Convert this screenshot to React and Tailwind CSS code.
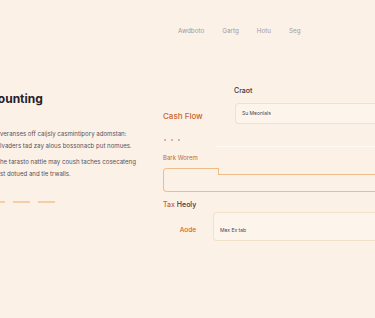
import React from "react";

const navItems = ["Awdboto", "Gartg", "Hotu", "Seg"];

const Nav = () => (
  <div className="flex h-[62px] items-center gap-[18px] pl-[178px]">
    {navItems.map((item) => (
      <span key={item} className="text-[6.3px] leading-none text-[#a09aa4]">
        {item}
      </span>
    ))}
  </div>
);

const Intro = () => (
  <div className="w-[163px] shrink-0 pt-[29px]">
    <h1 className="-ml-[25px] whitespace-nowrap text-[12px] font-bold leading-[16px] text-[#24212e]">
      Accounting
    </h1>
    <div className="mt-[21px] flex flex-col gap-[4px] text-[6.1px] leading-[12px] text-[#55505a]">
      <p className="whitespace-nowrap">
        <span className="block">veranses off caijsly casmintipory adomstan:</span>
        <span className="block">lvaders tad zay alous bossonacb put nomues.</span>
      </p>
      <p className="whitespace-nowrap">
        <span className="block">he tarasto nattle may coush taches cosecateng</span>
        <span className="block">st dotued and tle trwalls.</span>
      </p>
    </div>
    {/* pager dashes */}
    <div className="mt-[21px] -ml-[12px] flex gap-[8px]">
      <span className="h-[1.5px] w-[17px] bg-[#f2cfa6]" />
      <span className="h-[1.5px] w-[17px] bg-[#f2cfa6]" />
      <span className="h-[1.5px] w-[17px] bg-[#f2cfa6]" />
    </div>
  </div>
);

const Form = () => (
  <div className="flex flex-1 flex-col pt-[24px]">
    {/* cash flow + search */}
    <div className="flex items-end">
      <span className="mb-[2px] w-[71px] shrink-0 text-[8px] font-medium leading-[12px] text-[#c8652c]">
        Cash Flow
      </span>
      <div className="flex flex-1 flex-col">
        <span className="text-[7px] font-medium leading-[10px] text-[#3a3644]">
          Craot
        </span>
        <div className="mt-[7px] ml-[1px] flex h-[21px] items-center rounded-l-[4px] border border-r-0 border-[#f3e0c9] bg-[#fdf5ec] pl-[6px]">
          <span className="text-[5px] text-[#4b4650]">Su Meonlals</span>
        </div>
      </div>
    </div>

    {/* dots + faint divider */}
    <div className="mt-[9px] flex items-center">
      <div className="flex w-[52px] gap-[5px] pl-[1px]">
        <span className="h-[2px] w-[2px] rounded-full bg-[#c9a58a]" />
        <span className="h-[2px] w-[2px] rounded-full bg-[#c9a58a]" />
        <span className="h-[2px] w-[2px] rounded-full bg-[#c9a58a]" />
      </div>
      <span className="mt-[13px] h-px flex-1 bg-[#fffaf4]" />
    </div>

    <span className="mt-[7px] text-[6px] leading-[8px] text-[#b96a3c]">Bark Worem</span>

    {/* notched field */}
    <div className="mt-[6px] flex flex-col">
      <div className="h-[6px] w-[56px] rounded-tl-[4px] border-l border-r border-t border-[#efbd89]" />
      <div className="flex h-[18px] rounded-bl-[4px] border-b border-l border-[#efbd89]">
        <div className="w-[54px]" />
        <div className="flex-1 border-t border-[#efbd89]" />
      </div>
    </div>

    <span className="mt-[8px] text-[7px] font-medium leading-[9px] text-[#3a3644]">
      <span className="text-[#c8652c]">Tax</span> Heoly
    </span>

    {/* code row */}
    <div className="mt-[3px] flex items-end">
      <span className="mb-[7px] w-[50px] shrink-0 pr-[17px] text-right text-[6.5px] font-medium leading-[8px] text-[#c8652c]">
        Aode
      </span>
      <div className="flex h-[29px] flex-1 items-end rounded-l-[4px] border border-r-0 border-[#f3e0c9] bg-[#fdf5ec] pb-[7px] pl-[6px]">
        <span className="text-[5px] leading-[6px] text-[#4b4650]">Mex Ex tab</span>
      </div>
    </div>
  </div>
);

export default function App() {
  return (
    <div
      className="h-[318px] w-[375px] overflow-hidden bg-[#fcf1e6]"
      style={{ fontFamily: "Inter, 'Noto Sans', sans-serif" }}
    >
      <Nav />
      <div className="flex">
        <Intro />
        <Form />
      </div>
    </div>
  );
}
